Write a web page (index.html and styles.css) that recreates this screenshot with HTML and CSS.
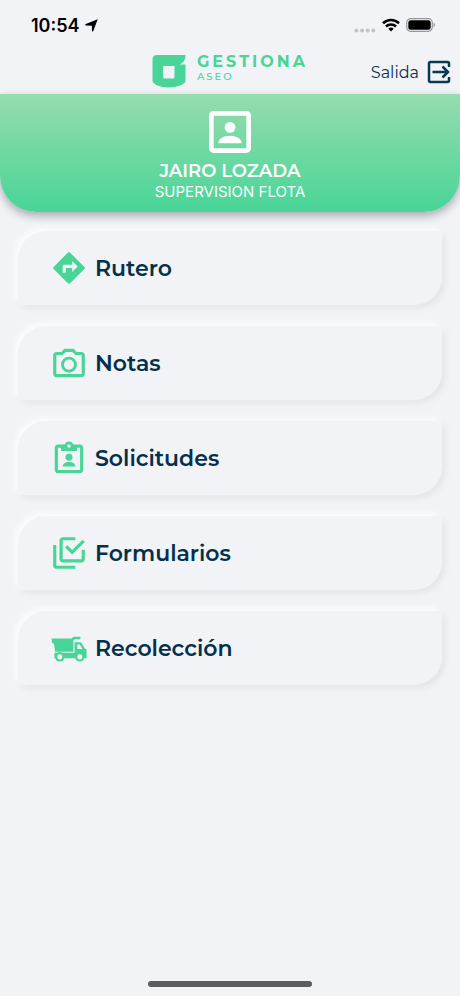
FILE: index.html
```html
<!DOCTYPE html>
<html lang="es">

<head>
    <meta charset="UTF-8">
    <meta name="viewport" content="width=device-width, initial-scale=1.0">
    <title>Gestiona Aseo</title>
    <link rel="stylesheet" href="styles.css">
</head>

<body>
    <div class="status-bar">
        <div class="status-time">
            <span>10:54</span>
            <svg width="13" height="13" viewBox="0 0 13 13" fill="#000">
                <path d="M12.700.3 8.300 12c-.3.800-1.400.700-1.400-.2V6.700L1 6.400C0 6.300 0 5.300.8 5z" />
            </svg>
        </div>
        <div class="status-icons">
            <svg width="22" height="5" viewBox="0 0 22 5" fill="#c3c4c8">
                <circle cx="2.500" cy="2.500" r="2" />
                <circle cx="8.100" cy="2.500" r="2" />
                <circle cx="13.700" cy="2.500" r="2" />
                <circle cx="19.300" cy="2.500" r="2" />
            </svg>
            <svg class="wifi" width="18" height="14" viewBox="0 0 18 14" fill="none" stroke="#000" stroke-width="2.600">
                <path d="M1 5.200a11.500 11.500 0 0 1 16 0" />
                <path d="M4 8.500a7.200 7.200 0 0 1 10 0" />
                <path d="M9 13.400 6.300 10.700a3.900 3.900 0 0 1 5.400 0z" fill="#000" stroke="none" />
            </svg>
            <svg class="battery" width="30" height="14" viewBox="0 0 30 14">
                <rect x=".7" y=".7" width="25.600" height="12.600" rx="4" fill="none" stroke="#96979b" stroke-width="1.200" />
                <rect x="2.300" y="2.300" width="22.400" height="9.400" rx="2.500" fill="#000" />
                <path d="M27.600 4.800v4.400c1.900-.8 1.900-3.600 0-4.400z" fill="#96979b" />
            </svg>
        </div>
    </div>

    <header class="top-bar">
        <div class="logo">
            <svg width="34" height="34" viewBox="0 0 34 34" fill="#48d597">
                <path fill-rule="evenodd" d="M5 1h28.500c0 4.500-2 8-6 9.500h6V27c0 3-9 6.500-17 6.500S.5 30 .5 27V5.500C.5 2.500 2 1 5 1zM11 12v11q0 1.500 1.500 1.500h8.500q1.500 0 1.500-1.500V12z" />
            </svg>
            <div class="logo-text">
                <span class="logo-name">GESTIONA</span>
                <span class="logo-sub">ASEO</span>
            </div>
        </div>
        <a class="logout" href="#">
            <span>Salida</span>
            <svg width="24" height="24" viewBox="0 0 24 24" fill="none" stroke="#0b3a50" stroke-width="2.500">
                <path d="M22 7V3.500Q22 2 20.500 2h-17Q2 2 2 3.500v17Q2 22 3.500 22h17q1.500 0 1.500-1.500V17" />
                <path d="M5.500 12h15M15.500 6.500 21 12l-5.500 5.500" />
            </svg>
        </a>
    </header>

    <section class="profile">
        <svg width="56" height="56" viewBox="0 0 24 24" fill="#fff">
            <path d="M19 5v14H5V5h14m0-2H5c-1.100 0-2 .9-2 2v14c0 1.100.9 2 2 2h14c1.100 0 2-.9 2-2V5c0-1.100-.9-2-2-2z" />
            <circle cx="12" cy="10" r="2.300" />
            <path d="M7 16.800c0-2 2.300-3.200 5-3.200s5 1.200 5 3.200z" />
        </svg>
        <h1>JAIRO LOZADA</h1>
        <p>SUPERVISION FLOTA</p>
    </section>

    <nav class="menu">
        <a class="menu-item" href="#">
            <svg viewBox="0 0 24 24">
                <path d="m21.710 11.290-9-9a1 1 0 0 0-1.410 0l-9 9a1 1 0 0 0 0 1.410l9 9c.39.39 1.020.39 1.410 0l9-9a1 1 0 0 0 0-1.410zM14 14.500V12h-4v3H8v-4c0-.55.45-1 1-1h5V7.500l3.500 3.500z" />
            </svg>
            <span>Rutero</span>
        </a>
        <a class="menu-item" href="#">
            <svg viewBox="0 0 24 24">
                <path d="M20 5h-3.170L15 3H9L7.170 5H4c-1.100 0-2 .9-2 2v12c0 1.100.9 2 2 2h16c1.100 0 2-.9 2-2V7c0-1.100-.9-2-2-2zm0 14H4V7h4.050l1.830-2h4.240l1.830 2H20v12zM12 8a5 5 0 1 0 0 10 5 5 0 0 0 0-10zm0 8.200a3.200 3.200 0 1 1 0-6.400 3.200 3.200 0 0 1 0 6.400z" />
            </svg>
            <span>Notas</span>
        </a>
        <a class="menu-item" href="#">
            <svg viewBox="0 0 24 24">
                <path fill-rule="evenodd" d="M19 3.500h-4.200a3 3 0 0 0-5.600 0H5c-1.100 0-2 .9-2 2v14c0 1.100.9 2 2 2h14c1.100 0 2-.9 2-2v-14c0-1.100-.9-2-2-2zM12 3.300a1.100 1.100 0 1 1 0 2.200 1.100 1.100 0 0 1 0-2.200zM19 19.500H5v-14h2v2h10v-2h2z" />
                <circle cx="12" cy="11.500" r="2.200" />
                <path d="M8 17.300c0-1.900 1.900-2.800 4-2.800s4 .9 4 2.800z" />
            </svg>
            <span>Solicitudes</span>
        </a>
        <a class="menu-item" href="#">
            <svg viewBox="0 0 24 24">
                <path d="M20 16V10h2v6c0 1.100-.9 2-2 2H8c-1.100 0-2-.9-2-2V4c0-1.100.9-2 2-2h8v2H8v12h12zM10.910 7.080 14 10.170l6.590-6.590L22 5l-8 8-4.500-4.500 1.410-1.420zM16 20v2H4c-1.100 0-2-.9-2-2V7h2v13h12z" />
            </svg>
            <span>Formularios</span>
        </a>
        <a class="menu-item" href="#">
            <svg viewBox="0 0 24 24">
                <path d="M1 6h12.500L15 4.900h4.200v1.600h-3.700l-.7.600v7.300H3.200L2.600 9.700 1.300 8.600z" />
                <path fill-rule="evenodd" d="M15.500 8.300h3.300c.5 0 .9.200 1.200.7l1.900 3.200 1.200.7v5.600H2.800v-3.500h12.700zM17.200 9.800v2.800h3.200l-1.600-2.800z" />
                <circle cx="6.200" cy="17.600" r="3" />
                <circle cx="18.800" cy="17.600" r="3" />
                <circle class="hub" cx="6.200" cy="17.600" r="1.600" />
                <circle class="hub" cx="18.800" cy="17.600" r="1.600" />
            </svg>
            <span>Recolección</span>
        </a>
    </nav>

    <div class="home-bar"></div>
</body>

</html>
```

FILE: styles.css
```css
* {
    box-sizing: border-box;
}

body {
    margin: 0;
    min-height: 100vh;
    display: flex;
    flex-direction: column;
    background: #f1f3f7;
    color: #03304a;
    font-family: 'Montserrat', 'Inter', sans-serif;
}

a {
    color: inherit;
    text-decoration: none;
}

svg {
    display: block;
    flex-shrink: 0;
}

.status-bar {
    display: flex;
    justify-content: space-between;
    align-items: center;
    height: 50px;
    padding: 0 24px 0 31px;
    color: #000;
}

.status-time {
    display: flex;
    align-items: center;
    gap: 5px;
    font-family: 'Inter', sans-serif;
    font-size: 18px;
    font-weight: 600;
}

.status-icons {
    display: flex;
    align-items: center;
    gap: 6px;
}

.status-icons svg:first-child {
    margin-top: 10px;
}

.top-bar {
    display: grid;
    grid-template-columns: 1fr auto 1fr;
    align-items: center;
    height: 44px;
    padding: 0 9px;
}

.logo {
    grid-column: 2;
    display: flex;
    align-items: center;
    gap: 11px;
    padding-bottom: 2px;
}

.logo-text {
    display: flex;
    flex-direction: column;
    padding-bottom: 6px;
    color: #48d597;
}

.logo-name {
    font-size: 16px;
    line-height: 18px;
    font-weight: 700;
    letter-spacing: 3px;
}

.logo-sub {
    font-size: 10px;
    line-height: 12px;
    font-weight: 500;
    letter-spacing: 2px;
}

.logout {
    justify-self: end;
    display: flex;
    align-items: center;
    gap: 8px;
    font-size: 16px;
}

.profile {
    display: flex;
    flex-direction: column;
    align-items: center;
    padding: 10px 16px;
    border-radius: 0 0 36px 36px;
    background: linear-gradient(#96dcae, #48d597);
    box-shadow: 0 4px 10px rgba(0, 0, 0, 0.3);
    color: white;
}

.profile h1 {
    margin: 0;
    font-size: 18px;
    line-height: 22px;
    font-weight: 600;
}

.profile p {
    margin: 0;
    font-family: 'Inter', sans-serif;
    font-size: 15px;
    line-height: 20px;
    font-weight: 400;
}

.menu {
    display: flex;
    flex-direction: column;
    gap: 21px;
    padding: 19px 18px;
}

.menu-item {
    display: flex;
    align-items: center;
    gap: 7px;
    height: 74px;
    padding: 0 32px;
    border-radius: 28px 6px;
    background: #f1f3f7;
    box-shadow: -3px -3px 6px #fcfdff, 3px 3px 6px #e2e4e8;
    font-size: 22px;
    font-weight: 600;
}

.menu-item svg {
    width: 38px;
    height: 38px;
    fill: #48d597;
}

.menu-item .hub {
    fill: #f1f3f7;
}

.home-bar {
    width: 164px;
    height: 6px;
    margin: auto auto 9px;
    border-radius: 3px;
    background: #5c5d61;
}
```
